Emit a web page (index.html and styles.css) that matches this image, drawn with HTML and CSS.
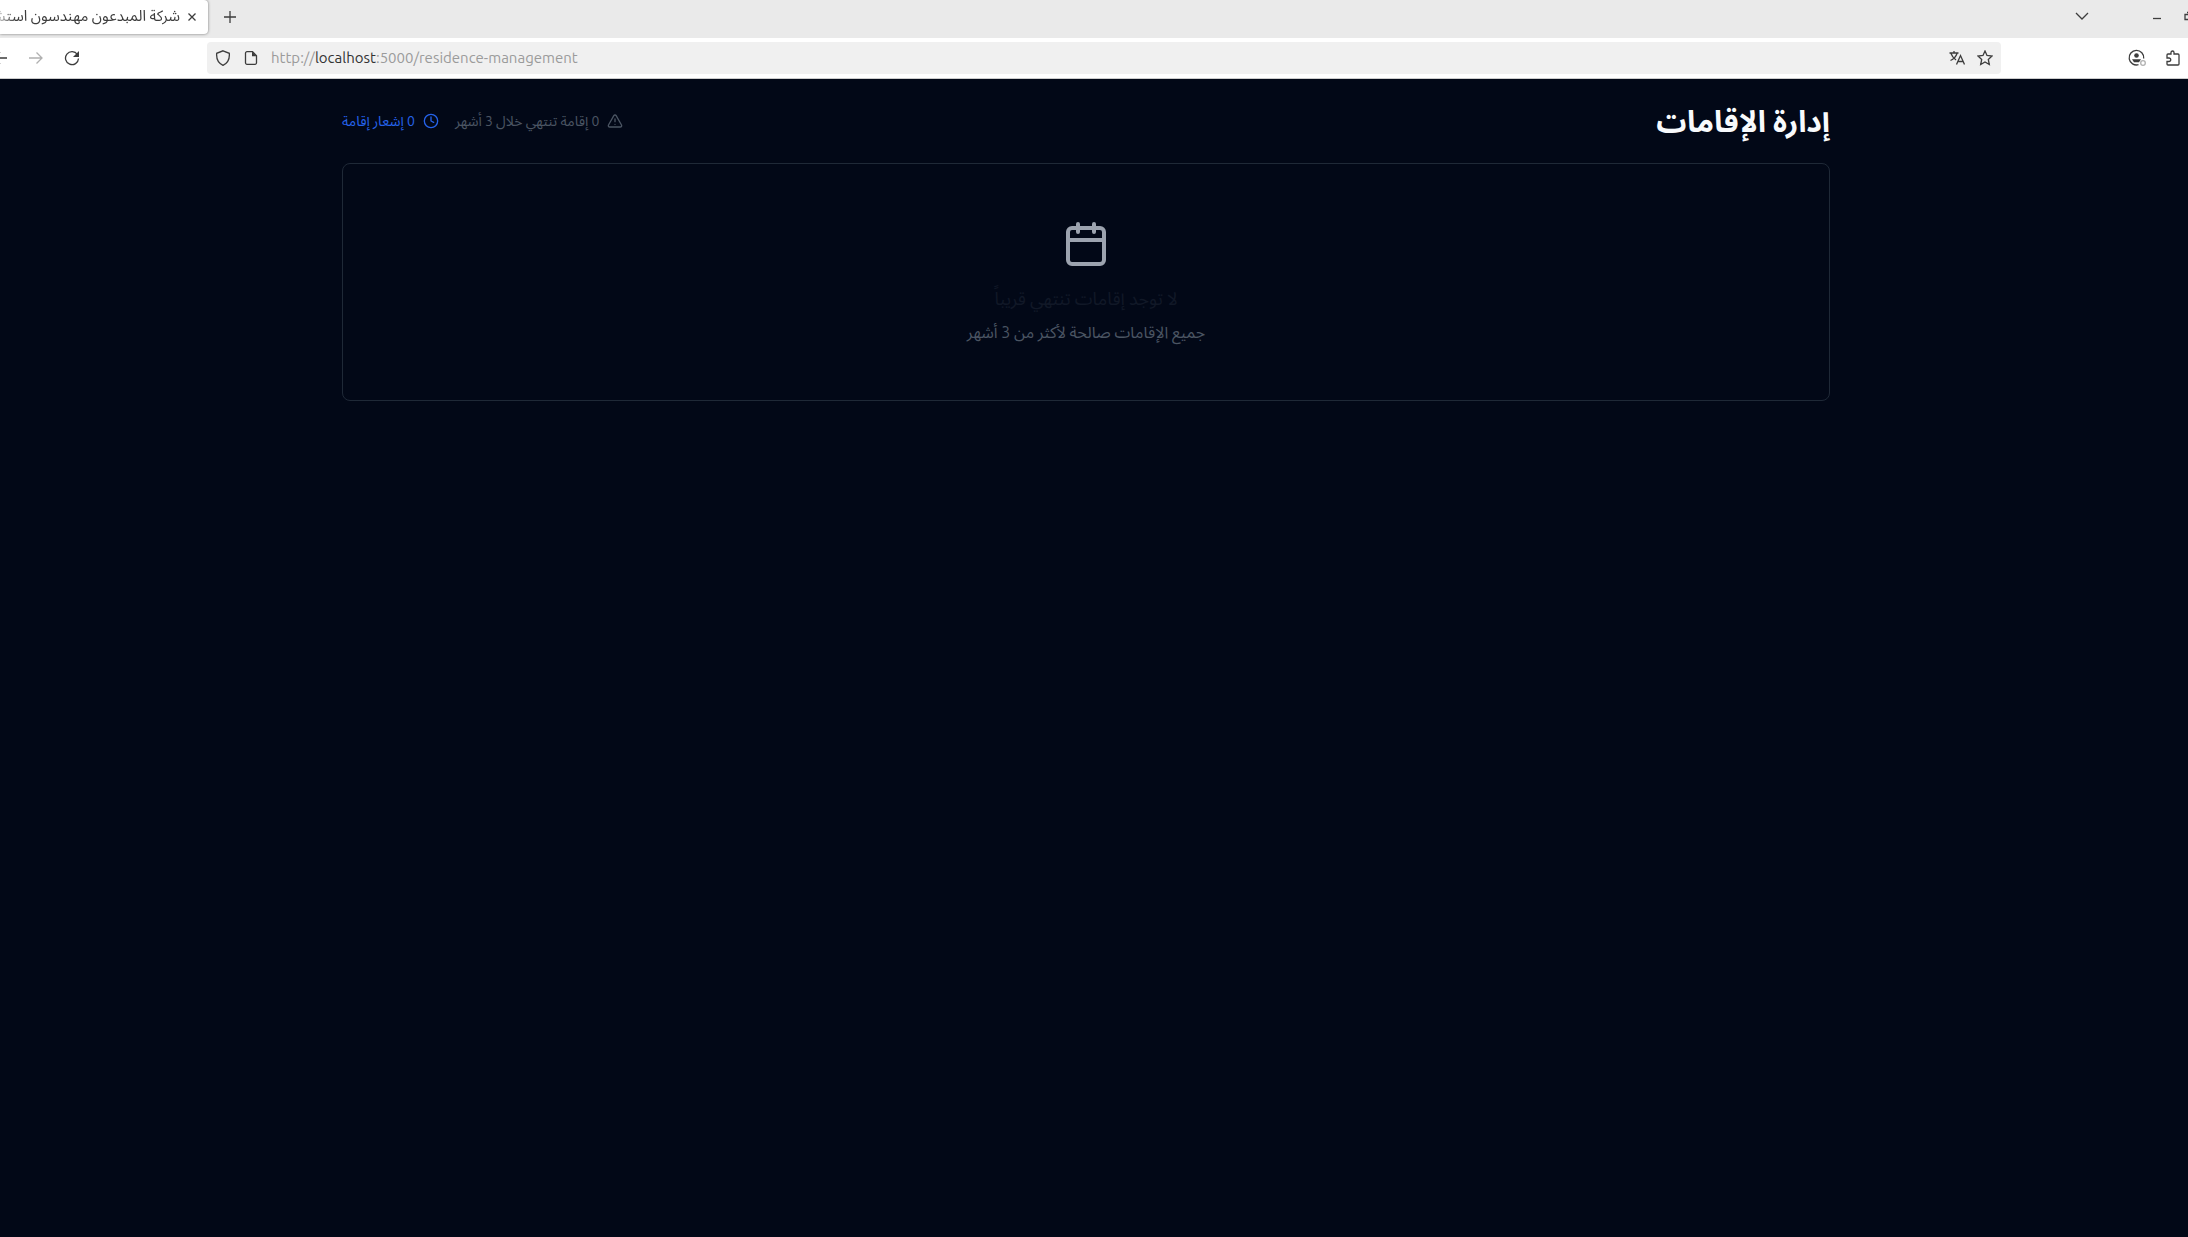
FILE: index.html
```html
<!DOCTYPE html>
<html lang="ar">
<head>
<meta charset="utf-8">
<meta name="viewport" content="width=device-width, initial-scale=1">
<title>إدارة الإقامات</title>
<link rel="stylesheet" href="styles.css">
</head>
<body>
<header class="browser">
  <div class="tabs">
    <div class="tab">
      <span class="tab-title" dir="rtl">شركة المبدعون مهندسون استشاريون</span>
      <button class="tool tab-close" aria-label="Close tab"><svg width="12" height="12" viewBox="0 0 12 12"><path d="M2.5 2.5l7 7M9.5 2.5l-7 7"/></svg></button>
    </div>
    <button class="tool new-tab" aria-label="New tab"><svg width="16" height="16" viewBox="0 0 16 16"><path d="M8 2v12M2 8h12"/></svg></button>
    <div class="window-tools">
      <button class="tool list-tabs" aria-label="List tabs"><svg width="16" height="16" viewBox="0 0 16 16"><path d="M2 5l6 6 6-6"/></svg></button>
      <button class="tool" aria-label="Minimize"><svg width="16" height="16" viewBox="0 0 16 16"><path d="M4 10.500h8"/></svg></button>
      <button class="tool restore" aria-label="Restore"><svg width="16" height="16" viewBox="0 0 16 16"><path d="M5 6.500h7v5h-7zM7 4.500h7v5"/></svg></button>
    </div>
  </div>
  <div class="nav">
    <div class="history">
      <button class="tool" aria-label="Back"><svg width="16" height="16" viewBox="0 0 16 16"><path d="M15 8H2M8 2L2 8l6 6"/></svg></button>
      <button class="tool off" aria-label="Forward"><svg width="16" height="16" viewBox="0 0 16 16"><path d="M1 8h13M8.500 2.500L14 8l-5.500 5.500"/></svg></button>
      <button class="tool" aria-label="Reload"><svg width="16" height="16" viewBox="0 0 16 16"><path d="M13.400 4.500A6.500 6.500 0 1 0 14.500 8.500"/><path class="solid" d="M15 1v6H9z"/></svg></button>
    </div>
    <div class="address">
      <svg width="16" height="16" viewBox="0 0 16 16"><path d="M8 .8l6.300 2.500c.5 5.500-1.500 9.700-6.300 12C3.200 13 1.200 8.800 1.700 3.300z"/></svg>
      <svg width="16" height="16" viewBox="0 0 16 16"><path d="M9.500 1.700H4A1.500 1.500 0 0 0 2.500 3.200v9.600A1.500 1.500 0 0 0 4 14.300h8a1.500 1.500 0 0 0 1.500-1.500V5.700z"/><path class="solid" d="M9 1.500v4.700h4.700z"/></svg>
      <a class="url" href="http://localhost:5000/residence-management">http://<span class="host">localhost</span>:5000/residence-management</a>
      <button class="tool" aria-label="Translate"><svg width="16" height="16" viewBox="0 0 16 16"><path d="M.5 3h9M5 1v2M2 3.500c1 3 3 5 5 6.500M8 3.500c-1 3-3 5.500-6.500 7M7.500 14.500L11.500 5.500l4 9M9 11.500h5"/></svg></button>
      <button class="tool" aria-label="Bookmark"><svg width="16" height="16" viewBox="0 0 16 16"><path d="M8 1l2 4.500 5 .6-3.700 3.300 1 5.100L8 12l-4.300 2.500 1-5.100L1 6.100l5-.6z"/></svg></button>
    </div>
    <div class="extras">
      <button class="tool" aria-label="Account"><svg width="18" height="18" viewBox="0 0 18 18"><path d="M10.500 15.700A7.300 7.300 0 1 1 15.700 9.500"/><circle class="solid" cx="8.500" cy="6.500" r="2.300"/><path class="solid" d="M4 10.300h9l-2 3H6z"/><circle class="status" cx="15" cy="14" r="2.300"/></svg></button>
      <button class="tool" aria-label="Extensions"><svg width="16" height="16" viewBox="0 0 16 16"><path d="M2 6V5a1 1 0 0 1 1-1h3V2.500a1.500 1.500 0 0 1 3 0V4h4a1 1 0 0 1 1 1v9a1 1 0 0 1-1 1H3a1 1 0 0 1-1-1v-2.500h2a1.500 1.500 0 0 0 0-3.500H2z"/></svg></button>
    </div>
  </div>
</header>
<main class="page" dir="rtl">
  <div class="container">
    <div class="heading">
      <h1>إدارة الإقامات</h1>
      <div class="stats">
        <div class="stat"><svg class="line" width="16" height="16" viewBox="0 0 24 24"><path d="m21.730 18-8-14a2 2 0 0 0-3.480 0l-8 14A2 2 0 0 0 4 21h16a2 2 0 0 0 1.730-3M12 9v4M12 17h.01"/></svg><span>0 إقامة تنتهي خلال 3 أشهر</span></div>
        <div class="stat notice"><svg class="line" width="16" height="16" viewBox="0 0 24 24"><circle cx="12" cy="12" r="10"/><path d="M12 6v6l4 2"/></svg><span>0 إشعار إقامة</span></div>
      </div>
    </div>
    <section class="card">
      <svg class="line calendar" width="48" height="48" viewBox="0 0 24 24"><path d="M8 2v4M16 2v4M3 10h18"/><rect x="3" y="4" width="18" height="18" rx="2"/></svg>
      <h2>لا توجد إقامات تنتهي قريباً</h2>
      <p>جميع الإقامات صالحة لأكثر من 3 أشهر</p>
    </section>
  </div>
</main>
</body>
</html>
```
FILE: styles.css
```css
* { box-sizing: border-box; }
body {
  margin: 0;
  min-height: 100vh;
  display: flex;
  flex-direction: column;
  background: #020817;
  font-family: Ubuntu, "Noto Sans Arabic", "Noto Sans", sans-serif;
}
svg { display: block; flex: none; fill: none; stroke: currentColor; stroke-width: 1.3; }
.solid { fill: currentColor; stroke: none; }
.tool { display: block; border: 0; padding: 0; background: none; color: inherit; }

.browser { color: #3d3d3d; background: #fff; border-bottom: 1px solid #ccc; overflow: hidden; }
.tabs { display: flex; align-items: center; height: 38px; background: #eaeaea; }
.tab {
  display: flex;
  align-items: center;
  justify-content: flex-end;
  gap: 6px;
  width: 208px;
  height: 34px;
  margin-bottom: 4px;
  padding-right: 10px;
  background: #fff;
  border-radius: 0 4px 4px 0;
  box-shadow: 0 0 3px rgba(0, 0, 0, .5);
}
.tab-title {
  flex: 1;
  margin-bottom: 2px;
  overflow: hidden;
  white-space: nowrap;
  font-size: 15px;
  line-height: 24px;
  -webkit-mask-image: linear-gradient(to right, rgba(0, 0, 0, .4), #000 16px);
  mask-image: linear-gradient(to right, rgba(0, 0, 0, .4), #000 16px);
}
.new-tab { margin-left: 14px; margin-bottom: 4px; }
.window-tools { display: flex; margin: 0 -8px 6px auto; }
.list-tabs { margin-right: 59px; }
.restore { margin-left: 15px; }

.nav { display: flex; align-items: center; height: 40px; }
.history { display: flex; gap: 20px; width: 207px; }
.history .tool:first-child { margin-left: -8px; }
.off { color: #b0b0b0; }
.address {
  flex: 1;
  display: flex;
  align-items: center;
  gap: 12px;
  height: 32px;
  padding: 0 8px;
  background: #f0f0f0;
  border-radius: 4px;
}
.url { flex: 1; color: #9b9b9b; font-family: Ubuntu, "Open Sans", sans-serif; font-size: 15px; line-height: 24px; text-decoration: none; }
.host { color: #333; }
.extras { display: flex; align-items: center; justify-content: flex-end; gap: 19px; width: 187px; padding-right: 7px; }
.status { stroke: #b0b0b0; }

.page { padding: 24px 0; margin-right: 16px; color: #f8fafc; }
.container { max-width: 1536px; margin: 0 auto; padding: 0 24px; }
.heading { display: flex; align-items: center; justify-content: space-between; margin-bottom: 24px; }
h1 { margin: 0; font-size: 30px; line-height: 36px; font-weight: 700; }
.stats { display: flex; gap: 16px; }
.stat { display: flex; align-items: center; gap: 8px; color: #4b5563; font-size: 14px; line-height: 20px; }
.notice { color: #2563eb; }
.line { stroke-width: 2; stroke-linecap: round; stroke-linejoin: round; }
.card {
  padding: 56px;
  border: 1px solid #1f2937;
  border-radius: 8px;
  text-align: center;
}
.calendar { margin: 0 auto 16px; color: #9ca3af; }
h2 { margin: 0 0 8px; color: #111827; font-size: 18px; line-height: 28px; font-weight: 400; }
p { margin: 0; color: #4b5563; font-size: 16px; line-height: 24px; }
```
